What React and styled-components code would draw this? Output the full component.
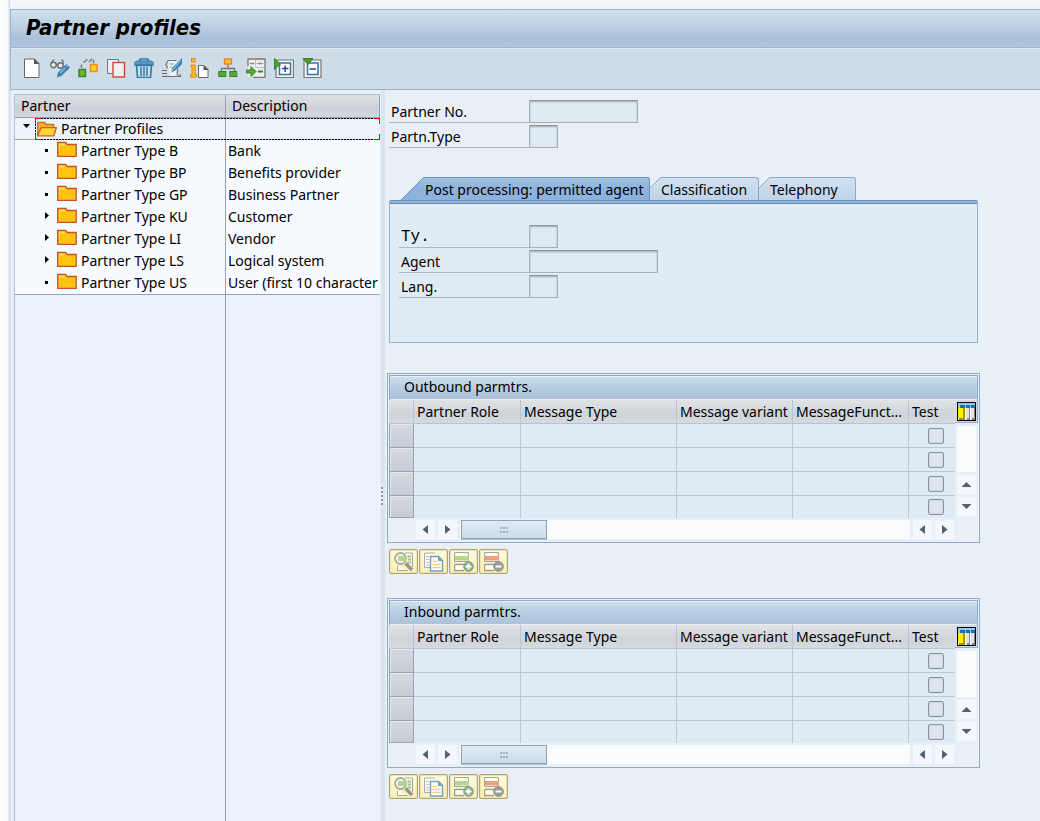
import React from "react";
import styled, { createGlobalStyle, css } from "styled-components";

const GlobalStyle = createGlobalStyle`
  * { box-sizing: border-box; }
  body {
    margin: 0;
    background: #e8eff7;
    color: #000;
    font-family: "Noto Sans", "DejaVu Sans", sans-serif;
    font-size: 14px;
    line-height: 20px;
  }
  button, input { font: inherit; color: inherit; margin: 0; }
`;

const Page = styled.div`
  display: flex;
  flex-direction: column;
  height: 100vh;
  padding: 9px 0 0 10px;
  overflow: hidden;
  background: linear-gradient(90deg, #ffffff 0, #f6f8fc 8px, #d3dfe9 9px, #d3dfe9 10px, transparent 10px),
    linear-gradient(#f5f7fb 0, #f1f4f9 8px, #e8eff7 9px);
`;

const TitleBar = styled.header`
  flex: none;
  height: 38px;
  padding: 0 15px;
  border-top: 1px solid #9db1c6;
  border-left: 1px solid #a0b4c8;
  background: linear-gradient(#cfe0eb, #bdd1e2 45%, #aac1da 75%, #b0c5dc);
`;

const Title = styled.h1`
  margin: 0;
  font-family: "DejaVu Sans Condensed", "DejaVu Sans", sans-serif;
  font-size: 22px;
  line-height: 36px;
  font-weight: bold;
  font-style: italic;
`;

const Toolbar = styled.div`
  flex: none;
  display: flex;
  align-items: center;
  gap: 8px;
  height: 43px;
  padding: 0 11px 2px;
  border: solid #9fb3c9;
  border-width: 1px 0 1px 1px;
  background: #cedce7;
  box-shadow: inset 0 1px #e3ecf3;
`;

const ToolButton = styled.button`
  display: flex;
  width: 20px;
  height: 20px;
  padding: 0;
  border: 0;
  background: none;
`;

const Body = styled.div`
  flex: 1;
  display: flex;
  min-height: 0;
  border-left: 1px solid #dde6ef;
`;

const TreePane = styled.aside`
  display: flex;
  flex-direction: column;
  width: 366px;
  flex: none;
  margin: 4px 1px 0 3px;
  border: solid #b4c3d1;
  border-width: 1px 0 0 1px;
`;

const TreeTable = styled.table`
  width: 100%;
  table-layout: fixed;
  border-collapse: separate;
  border-spacing: 0;
`;

const TreeHead = styled.th`
  height: 23px;
  padding: 0 6px;
  text-align: left;
  font-weight: normal;
  line-height: 22px;
  border: solid #93a5b5;
  border-width: 0 1px 1px 0;
  background: linear-gradient(#dde1e5, #cdd2d8 60%, #d3d8dd);
`;

const TreeRow = styled.tr`
  position: relative;
  background: ${(p) => (p.$root ? "#edf3fb" : "#f7faff")};
`;

const TreeCell = styled.td`
  height: 22px;
  padding: 0 0 0 2px;
  white-space: nowrap;
  line-height: 22px;
  &:first-child { border-right: 1px solid #93a5b5; }
  ${(p) => p.$line && css`
    line-height: 21px;
    border-bottom: 1px solid #93a5b5;
  `}
`;

const Node = styled.div`
  display: flex;
  align-items: center;
  gap: 4px;
  padding-left: ${(p) => (p.$root ? 4 : 24)}px;
`;

const Marker = styled.svg`
  flex: none;
  width: 12px;
  height: 18px;
  align-self: flex-start;
`;

const FocusFrame = styled.span`
  position: absolute;
  inset: 0 0 0 20px;
  pointer-events: none;
  background:
    linear-gradient(#e00, #e00) 0 0 / 6px 1px,
    linear-gradient(#e00, #e00) 0 100% / 6px 1px,
    linear-gradient(#e00, #e00) 100% 0 / 6px 1px,
    linear-gradient(#e00, #e00) 100% 100% / 6px 1px,
    linear-gradient(#e00, #e00) 0 0 / 1px 6px,
    linear-gradient(#e00, #e00) 0 100% / 1px 6px,
    linear-gradient(#e00, #e00) 100% 0 / 1px 6px,
    linear-gradient(#e00, #e00) 100% 100% / 1px 6px,
    repeating-linear-gradient(90deg, #000 0 2px, #9aa 2px 3px) 0 0 / 100% 1px,
    repeating-linear-gradient(90deg, #000 0 2px, #9aa 2px 3px) 0 100% / 100% 1px,
    repeating-linear-gradient(#000 0 2px, transparent 2px 3px) 0 0 / 1px 100%;
  background-repeat: no-repeat;
`;

const TreeRest = styled.div`
  flex: 1;
  display: grid;
  grid-template-columns: 211px 1fr;
  border-top: 1px solid #93a5b5;
  background: #ebf2fb;
  &::before { content: ""; border-right: 1px solid #93a5b5; }
`;

const Splitter = styled.div`
  flex: none;
  width: 4px;
  padding-top: 397px;
  background: #d9e5ec;
  &::before {
    content: "";
    display: block;
    width: 2px;
    height: 18px;
    background: repeating-linear-gradient(#7f93a6 0 2px, #f4f8fb 2px 4px);
  }
`;

const Main = styled.main`
  flex: 1;
  min-width: 0;
  padding: 10px 60px 0 2px;
`;

const Form = styled.div`
  display: flex;
  flex-direction: column;
  gap: 2px;
  margin: 0 ${(p) => (p.$inset ? 0 : 2)}px;
`;

const Field = styled.div`
  display: flex;
  height: 23px;
`;

const Label = styled.label`
  width: ${(p) => p.$width}px;
  padding-left: 2px;
  border-bottom: 1px solid #b2b7bb;
  line-height: 24px;
  ${(p) => p.$mono && css`
    font-family: "Liberation Mono", monospace;
    font-size: 16px;
  `}
`;

const TextBox = styled.input`
  width: ${(p) => p.$width}px;
  height: 23px;
  padding: 0 4px;
  border: 1px solid #a9afb3;
  border-top-color: #8f9599;
  border-radius: 1px;
  background: #deebf5;
  box-shadow: inset 0 1px 2px #a4adb3;
  outline: none;
`;

const TabStrip = styled.div`
  margin: 29px 2px 30px;
`;

const TabList = styled.div`
  display: flex;
  height: 23px;
  padding-left: 12px;
`;

const Tab = styled.button`
  display: flex;
  height: 23px;
  padding: 0;
  border: 0;
  background: none;
  white-space: nowrap;
`;

const TabLabel = styled.span`
  min-width: ${(p) => p.$width}px;
  height: 23px;
  text-align: left;
  line-height: 24px;
  border: 1px solid ${(p) => (p.$active ? "#6d93bd" : "#8ba9c8")};
  border-width: 1px 1px 0 0;
  border-radius: 0 3px 0 0;
  background: ${(p) =>
    p.$active ? "linear-gradient(#a4c2e2, #8db2dc 50%)" : "linear-gradient(#d0e0ef, #bfd4e9)"};
`;

const TabPanel = styled.div`
  height: 143px;
  padding: 24px 9px 0;
  border: 1px solid #94b1cd;
  border-top: 1px solid #6a8fb8;
  border-radius: 2px 2px 0 0;
  background: linear-gradient(#94b6da 0 2px, #5e87b3 2px 3px, #dfebf5 3px);
`;

const GridBox = styled.section`
  padding: 1px;
  border: 1px solid #8fabc7;
`;

const GridTitle = styled.h2`
  height: 25px;
  margin: 0;
  padding-left: 14px;
  font-size: 14px;
  font-weight: normal;
  line-height: 22px;
  border: solid #8fabc7;
  border-width: 1px 1px 0 1px;
  background: linear-gradient(#cde0ec, #b7cde0 50%, #a9c1da);
  box-shadow: inset 0 1px #e6eef6, inset 0 -1px #e6eef6;
`;

const GridBody = styled.div`
  display: flex;
`;

const Grid = styled.table`
  flex: 1;
  width: 100%;
  min-width: 0;
  table-layout: fixed;
  border-collapse: separate;
  border-spacing: 0;
`;

const HeadCell = styled.th`
  height: 24px;
  padding: 0 0 0 3px;
  overflow: hidden;
  white-space: nowrap;
  text-align: left;
  font-weight: normal;
  line-height: 23px;
  border: solid #b7c4d3;
  border-width: 0 1px 1px 0;
  background: linear-gradient(#e0e3e6, #d0d4d9 60%, #d6dade);
  &:last-child { border-right-color: #d6dade; }
`;

const RowHead = styled.td`
  padding: 0;
  border: solid #98a3b1;
  border-width: 0 1px 1px 1px;
  background: linear-gradient(#d5d9e0, #c6ccd5);
  box-shadow: inset 1px 1px #e5e8ec;
`;

const Cell = styled.td`
  height: ${(p) => (p.$last ? 22 : 24)}px;
  padding: 0;
  line-height: 0;
  border: solid #b9c7d7;
  border-width: 0 1px ${(p) => (p.$last ? 0 : 1)}px 0;
  background: #deebf5;
  &:last-child {
    padding-left: 19px;
    border-right: 0;
  }
`;

const CheckBox = styled.input`
  appearance: none;
  display: block;
  width: 16px;
  height: 16px;
  margin: 0;
  border: 1px solid #8d9296;
  border-radius: 2px;
  background: #dce6f0;
  box-shadow: inset 0 0 2px #b5bec6;
`;

const SideBar = styled.div`
  display: flex;
  flex-direction: column;
  align-items: center;
  gap: 3px;
  width: 23px;
  padding-bottom: 2px;
  flex: none;
`;

const ConfigButton = styled.button`
  display: flex;
  align-self: stretch;
  height: 23px;
  padding: 2px 1px 0 2px;
  border: solid #8fabc7;
  border-width: 0 1px 1px 0;
  background: #d6dade;
`;

const Track = styled.div`
  flex: 1;
  width: 19px;
  background: #fafbfc;
`;

const ArrowButton = styled.button`
  display: flex;
  align-items: center;
  justify-content: center;
  flex: none;
  width: 19px;
  height: 19px;
  padding: 0;
  border: 0;
  background: #f4f7fc;
`;

const ScrollRow = styled.div`
  display: flex;
  align-items: center;
  gap: 3px;
  height: 23px;
  padding: 0 24px 0 27px;
`;

const HTrack = styled.div`
  flex: 1;
  height: 19px;
  padding-left: 1px;
  background: #fafbfc;
`;

const Thumb = styled.div`
  display: flex;
  align-items: center;
  justify-content: center;
  width: 86px;
  height: 19px;
  border: 1px solid #8ea2b6;
  background: linear-gradient(#e2ebf5, #cbdbe9);
  box-shadow: 0 1px #b4c2cf;
`;

const ActionBar = styled.div`
  display: flex;
  gap: 1px;
  margin: 6px 2px 24px;
`;

const ActionButton = styled.button`
  display: flex;
  align-items: center;
  justify-content: center;
  width: 29px;
  height: 25px;
  padding: 0;
  border: 1px solid #aaa47f;
  border-radius: 2px;
  background: linear-gradient(#fffbe0, #fbefb4);
  box-shadow: inset 0 0 0 1px #f1e49f;
`;

const Icon = ({ children }) => (
  <svg width="20" height="20" viewBox="0 0 20 20" fill="none" aria-hidden="true">
    {children}
  </svg>
);

const tools = [
  {
    name: "Create",
    art: (
      <>
        <path d="M2.5 1h10l4.500 4.500v14H2.500z" fill="#fff" stroke="#666" />
        <path d="M12 .5 17.500 6H12z" fill="#555" />
      </>
    ),
  },
  {
    name: "Display/Change",
    art: (
      <>
        <circle cx="3.500" cy="7" r="2.700" fill="#e3eaf0" stroke="#6e6e6e" strokeWidth="1.400" />
        <circle cx="10.500" cy="7.500" r="2.700" fill="#e3eaf0" stroke="#6e6e6e" strokeWidth="1.400" />
        <path d="M6 6.500h2M1 5.500 4 1.500M13 6.500V3L11.500 1.500" stroke="#6e6e6e" strokeWidth="1.300" />
        <path d="m8 14.500 8.500-8.500 3.500 3.500-8.500 8.500L7 19.500z" fill="#3d83b4" />
        <path d="m10 15 7.500-7.500" stroke="#8fc0df" strokeWidth="1.200" />
        <path d="m14.500 8 3.500 3.500" stroke="#245f8d" />
      </>
    ),
  },
  {
    name: "Other object",
    art: (
      <>
        <path d="M3.500 10V6.500M5.500 4.500 9.500 1.500M11 4l3-3M15.500 1.500V5" stroke="#777" strokeWidth="1.400" />
        <rect x="1" y="11.500" width="6.500" height="7" fill="#6db52d" stroke="#35872e" strokeWidth="1.500" />
        <rect x="12.500" y="6.500" width="6.500" height="7" fill="#ffd21c" stroke="#f08a24" strokeWidth="1.500" />
      </>
    ),
  },
  {
    name: "Copy",
    art: (
      <>
        <path d="M6 15.500H1.500v-14h11V4" stroke="#777" fill="#e8edf1" />
        <rect x="7" y="4.500" width="11.500" height="14.500" fill="#eef0f2" stroke="#c54b38" strokeWidth="1.400" />
      </>
    ),
  },
  {
    name: "Delete",
    art: (
      <>
        <path d="M6 3.500V1h8v2.500" stroke="#3b7fae" strokeWidth="1.600" />
        <path d="M0 7c0-2.500 1.500-4 4-4h12c2.500 0 4 1.500 4 4z" fill="#5b97c1" stroke="#2f76a8" />
        <path d="M2.500 7.500h15l-1 12h-13z" fill="#cfe1ee" stroke="#2f76a8" strokeWidth="1.600" />
        <path d="M7 9v9M10 9v9M13 9v9" stroke="#2f76a8" strokeWidth="1.500" />
      </>
    ),
  },
  {
    name: "Check",
    art: (
      <>
        <path d="M6 2.500h8.500M6 2.500l-2 4 1.500 4M16 11l-1 4 2 3.500" stroke="#777" strokeWidth="1.200" />
        <path d="M6.500 3H15l-1 15H8l-2-8z" fill="#eef1f4" />
        <path d="M0 12.500h5M0 15.500h5M0 18.500h18.500v-2" stroke="#6e6e6e" strokeWidth="1.200" />
        <path d="M7.500 6h4M8 9h2" stroke="#888" />
        <path d="M20 0v6l-6 6-4.500 2.500L10 10z" fill="#3d83b4" />
        <path d="M18.500 2.500 8.500 14.500" stroke="#a9cfe6" />
      </>
    ),
  },
  {
    name: "Information",
    art: (
      <>
        <rect x="1.500" y=".500" width="3.500" height="3.500" fill="#ffc321" stroke="#e87f22" />
        <path d="M1 7h4v9.500h1.500v2.500H.500v-2.500H2V9H1z" fill="#ffc321" stroke="#e87f22" />
        <path d="M8.500 7.500H14l4 4v8H8.500z" fill="#fff" stroke="#666" />
        <path d="M13.500 7 18.500 12h-5z" fill="#555" />
      </>
    ),
  },
  {
    name: "Hierarchy",
    art: (
      <>
        <path d="M10 6v5M3.500 14v-3.500h13V14" stroke="#777" strokeWidth="1.300" />
        <rect x="6.500" y="1" width="7" height="5" fill="#ffc321" stroke="#e9792b" strokeWidth="1.300" />
        <rect x=".800" y="13.500" width="7" height="5" fill="#59a82f" stroke="#35872e" />
        <rect x="11.800" y="13.500" width="7" height="5" fill="#59a82f" stroke="#35872e" />
      </>
    ),
  },
  {
    name: "Transfer",
    art: (
      <>
        <path d="M2 1h17v18.500H2z" fill="#eceff1" />
        <path d="M2 8V1h17v18.500H7" stroke="#777" strokeWidth="1.300" />
        <path d="M9.500 1.500v8M2.500 5.500h16M10 9.500h8.500" stroke="#bcc1c5" />
        <path d="M4 5.500h4M12 5.500h4" stroke="#888" strokeWidth="1.300" />
        <path d="M.500 12H5V8.500l5 5-5 5V15H.500z" fill="#59a82f" stroke="#35872e" />
        <path d="M12 13.500h5" stroke="#35872e" strokeWidth="2" />
      </>
    ),
  },
  {
    name: "Expand all",
    art: (
      <>
        <path d="M2 2h17.500v17.500H2z" fill="#f0f3f5" stroke="#777" strokeWidth="1.200" />
        <rect x="5.500" y="5" width="11" height="11.500" fill="#fff" stroke="#2f76a8" strokeWidth="1.500" />
        <path d="M8 10.500h6.500M11.200 7.500v6.500" stroke="#2a43a0" strokeWidth="1.500" />
        <path d="M.500.500v11L6.500 6z" fill="#4f9d2d" stroke="#35872e" />
      </>
    ),
  },
  {
    name: "Collapse all",
    art: (
      <>
        <path d="M2 2h17v17.500H2z" fill="#f0f3f5" stroke="#777" strokeWidth="1.200" />
        <rect x="5.500" y="5" width="10.500" height="11.500" fill="#fff" stroke="#2f76a8" strokeWidth="1.500" />
        <path d="M7.500 11h6.500" stroke="#2a43a0" strokeWidth="1.500" />
        <path d="M1 .500h10L6 6.500z" fill="#4f9d2d" stroke="#35872e" />
      </>
    ),
  },
];

const actions = [
  {
    name: "Display details",
    art: (
      <>
        <path d="M11 1h7.500v14M3.500 14v4.500h10" stroke="#a5a5a0" fill="#fdfcf3" />
        <path d="M13.500 4.500h3.500M14 7.500h3M13.500 10.500h3.500" stroke="#9cc486" strokeWidth="2" />
        <circle cx="6.500" cy="6.500" r="5.500" fill="#f7f6ea" stroke="#aaaaa4" strokeWidth="1.800" />
        <path d="M4 4h8v5H4z" fill="#b7d58c" />
        <path d="m11.500 11.500 6.500 6.500" stroke="#969692" strokeWidth="3.500" />
      </>
    ),
  },
  {
    name: "Copy",
    art: (
      <>
        <path d="M6 15.500H.500V1h10.500" stroke="#aaa" fill="#fdfcf3" />
        <path d="M2 4.500h3M2 7.500h3M2 10.500h3M2 13h3" stroke="#bbb" />
        <path d="M6.500 4.500h8l4 4v10.500h-12z" fill="#fff" stroke="#6fa2bd" strokeWidth="1.500" />
        <path d="M14 4v5h5z" fill="#6fa2bd" />
        <path d="M8.500 9.500h4.500M8.500 12.500h8M8.500 15.500h8" stroke="#f2cd7c" strokeWidth="1.500" />
      </>
    ),
  },
  {
    name: "Insert row",
    art: (
      <>
        <path d="M.500.500h14v9H.500z" fill="#fdfcf3" stroke="#a5a59e" />
        <path d="M1 4h14v4.500H1z" fill="#b7d58c" />
        <path d="M.500 12.500v6h9.500M.500 12.500h10" stroke="#9b9b96" strokeWidth="1.500" />
        <path d="M1.500 13.500h8.500v4H1.500z" fill="#fdfcf3" />
        <circle cx="14.500" cy="14.500" r="4.800" fill="#8cae8b" stroke="#7e9d7e" />
        <path d="M11.500 14.500h6M14.500 11.500v6" stroke="#fff" strokeWidth="2" />
      </>
    ),
  },
  {
    name: "Delete row",
    art: (
      <>
        <path d="M.500.500h14v9H.500z" fill="#fdfcf3" stroke="#a5a59e" />
        <path d="M1 4h14v4.500H1z" fill="#ee9f7b" />
        <path d="M.500 12.500v6h9.500M.500 12.500h10" stroke="#9b9b96" strokeWidth="1.500" />
        <path d="M1.500 13.500h8.500v4H1.500z" fill="#fdfcf3" />
        <circle cx="14.500" cy="14.500" r="4.800" fill="#9a9b9d" stroke="#8b8c8e" />
        <path d="M11.500 14.500h6" stroke="#fff" strokeWidth="2" />
      </>
    ),
  },
];

const partnerTypes = [
  { name: "Partner Type B", text: "Bank" },
  { name: "Partner Type BP", text: "Benefits provider" },
  { name: "Partner Type GP", text: "Business Partner" },
  { name: "Partner Type KU", text: "Customer", closed: true },
  { name: "Partner Type LI", text: "Vendor", closed: true },
  { name: "Partner Type LS", text: "Logical system", closed: true },
  { name: "Partner Type US", text: "User (first 10 character" },
];

const Folder = () => (
  <svg width="20" height="20" viewBox="0 0 20 20" aria-hidden="true">
    <path d="M.700 1.500h8l1.500 2h9v11.800H.700z" fill="#fdc411" stroke="#c9502b" strokeWidth="1.300" />
    <path d="M2 14V2.500h6L7 4.500H2.500z" fill="#ffdc63" />
  </svg>
);

const OpenFolder = () => (
  <svg width="20" height="16" viewBox="0 0 20 16" aria-hidden="true">
    <path d="M.700 14.500V1.500h7l1.500 2h7.500V7" fill="#f6b31d" stroke="#c9702b" strokeWidth="1.300" />
    <path d="M.700 14.800 4 6.700h15.300l-2.500 8.100z" fill="#fdd235" stroke="#c9602b" strokeWidth="1.300" />
  </svg>
);

const arrowPaths = {
  left: "M8 1v9L2.500 5.500z",
  right: "M3 1v9l5.500-4.500z",
  up: "M.500 8h10L5.500 3z",
  down: "M.500 3h10L5.500 8z",
};

const Arrow = ({ dir }) => (
  <ArrowButton type="button" aria-label={`Scroll ${dir}`}>
    <svg width="11" height="11" viewBox="0 0 11 11">
      <path d={arrowPaths[dir]} fill="#4f6373" />
    </svg>
  </ArrowButton>
);

const TabEdge = ({ active, id }) => {
  const w = active ? 24 : 11;
  const fill = active ? ["#a4c2e2", "#8db2dc"] : ["#d0e0ef", "#bfd4e9"];
  return (
    <svg width={w} height="23" viewBox={`0 0 ${w} 23`} aria-hidden="true">
      <defs>
        <linearGradient id={id} x2="0" y2="1">
          <stop offset="0" stopColor={fill[0]} />
          <stop offset={active ? ".5" : "1"} stopColor={fill[1]} />
        </linearGradient>
      </defs>
      <path d={active ? "M0 23 20 3l3-2.500h1V23z" : "M0 23V11L10.500.500h.500V23z"} fill={`url(#${id})`} />
      <path
        d={active ? "M0 23 21 2l2-1.500h1" : "M0 11 10.500.500h.500"}
        fill="none"
        stroke={active ? "#6d93bd" : "#8ba9c8"}
      />
    </svg>
  );
};

const FormField = ({ id, label, labelWidth, width, mono }) => (
  <Field>
    <Label htmlFor={id} $width={labelWidth} $mono={mono}>{label}</Label>
    <TextBox id={id} $width={width} readOnly />
  </Field>
);

const ParameterGrid = ({ title }) => (
  <>
    <GridBox>
      <GridTitle>{title}</GridTitle>
      <GridBody>
        <Grid>
          <colgroup>
            <col width="25" />
            <col width="107" />
            <col />
            <col width="116" />
            <col width="116" />
            <col width="46" />
          </colgroup>
          <thead>
            <tr>
              <HeadCell />
              <HeadCell>Partner Role</HeadCell>
              <HeadCell>Message Type</HeadCell>
              <HeadCell>Message variant</HeadCell>
              <HeadCell>MessageFunct...</HeadCell>
              <HeadCell>Test</HeadCell>
            </tr>
          </thead>
          <tbody>
            {[1, 2, 3, 4].map((row) => (
              <tr key={row}>
                <RowHead />
                <Cell $last={row === 4} />
                <Cell $last={row === 4} />
                <Cell $last={row === 4} />
                <Cell $last={row === 4} />
                <Cell $last={row === 4}>
                  <CheckBox type="checkbox" aria-label={`Test, row ${row}`} />
                </Cell>
              </tr>
            ))}
          </tbody>
        </Grid>
        <SideBar>
          <ConfigButton type="button" aria-label="Table settings">
            <svg width="19" height="19" viewBox="0 0 19 19" shapeRendering="crispEdges">
              <path d="M0 0h19v19H0z" fill="#000" />
              <path d="M1 1h17v17H1z" fill="#fff" />
              <path d="M1 1h17v2H1z" fill="#8ccbf2" />
              <path d="M3 3h15v3H3z" fill="#1d6fae" />
              <path d="M1 3h2v3H1z" fill="#8ccbf2" />
              <path d="M1 6h5v10H1z" fill="#ffee00" />
              <path d="M6 6h2v12H2v-2h4z" fill="#a89700" />
              <path d="M9 6h3v12H9zM14 6h3v12h-3z" fill="#dfe3e6" />
              <path d="M12 6h1v12h-3v-2h2zM17 6h1v12h-3v-2h2z" fill="#888" />
              <path d="M8 3h1v3H8zM13 3h1v3h-1z" fill="#8ccbf2" />
            </svg>
          </ConfigButton>
          <Track />
          <Arrow dir="up" />
          <Arrow dir="down" />
        </SideBar>
      </GridBody>
      <ScrollRow>
        <Arrow dir="left" />
        <Arrow dir="right" />
        <HTrack>
          <Thumb>
            <svg width="9" height="6" viewBox="0 0 9 6" shapeRendering="crispEdges">
              <path d="M0 0h2v2H0zM3 0h2v2H3zM6 0h2v2H6zM0 4h2v2H0zM3 4h2v2H3zM6 4h2v2H6z" fill="#9eafbf" />
            </svg>
          </Thumb>
        </HTrack>
        <Arrow dir="left" />
        <Arrow dir="right" />
      </ScrollRow>
    </GridBox>
    <ActionBar>
      {actions.map((a) => (
        <ActionButton key={a.name} type="button" aria-label={a.name}>
          <Icon>{a.art}</Icon>
        </ActionButton>
      ))}
    </ActionBar>
  </>
);

const PartnerTree = () => (
  <TreePane>
    <TreeTable>
      <colgroup>
        <col width="211" />
        <col />
      </colgroup>
      <thead>
        <tr>
          <TreeHead>Partner</TreeHead>
          <TreeHead>Description</TreeHead>
        </tr>
      </thead>
      <tbody>
        <TreeRow $root>
          <TreeCell $line>
            <Node $root>
              <Marker viewBox="0 0 12 18"><path d="M2 6h7L5.500 10z" /></Marker>
              <OpenFolder />
              Partner Profiles
            </Node>
          </TreeCell>
          <TreeCell $line><FocusFrame /></TreeCell>
        </TreeRow>
        {partnerTypes.map((p) => (
          <TreeRow key={p.name}>
            <TreeCell>
              <Node>
                <Marker viewBox="0 0 12 18">
                  <path d={p.closed ? "M4 6v7l4-3.500z" : "M4 9h3v3H4z"} />
                </Marker>
                <Folder />
                {p.name}
              </Node>
            </TreeCell>
            <TreeCell>{p.text}</TreeCell>
          </TreeRow>
        ))}
      </tbody>
    </TreeTable>
    <TreeRest />
  </TreePane>
);

export default function App() {
  return (
    <>
      <GlobalStyle />
      <Page>
        <TitleBar>
          <Title>Partner profiles</Title>
        </TitleBar>
        <Toolbar>
          {tools.map((t) => (
            <ToolButton key={t.name} type="button" aria-label={t.name}>
              <Icon>{t.art}</Icon>
            </ToolButton>
          ))}
        </Toolbar>
        <Body>
          <PartnerTree />
          <Splitter />
          <Main>
            <Form>
              <FormField id="partner-no" label="Partner No." labelWidth={140} width={109} />
              <FormField id="partner-type" label="Partn.Type" labelWidth={140} width={29} />
            </Form>
            <TabStrip>
              <TabList role="tablist">
                <Tab type="button" role="tab" aria-selected="true">
                  <TabEdge active id="tab-post" />
                  <TabLabel $active $width={225}>Post processing: permitted agent</TabLabel>
                </Tab>
                <Tab type="button" role="tab" aria-selected="false">
                  <TabEdge id="tab-class" />
                  <TabLabel $width={98}>Classification</TabLabel>
                </Tab>
                <Tab type="button" role="tab" aria-selected="false">
                  <TabEdge id="tab-tel" />
                  <TabLabel $width={86}>Telephony</TabLabel>
                </Tab>
              </TabList>
              <TabPanel role="tabpanel">
                <Form $inset>
                  <FormField id="ty" label="Ty." labelWidth={130} width={29} mono />
                  <FormField id="agent" label="Agent" labelWidth={130} width={129} />
                  <FormField id="lang" label="Lang." labelWidth={130} width={29} />
                </Form>
              </TabPanel>
            </TabStrip>
            <ParameterGrid title="Outbound parmtrs." />
            <ParameterGrid title="Inbound parmtrs." />
          </Main>
        </Body>
      </Page>
    </>
  );
}
